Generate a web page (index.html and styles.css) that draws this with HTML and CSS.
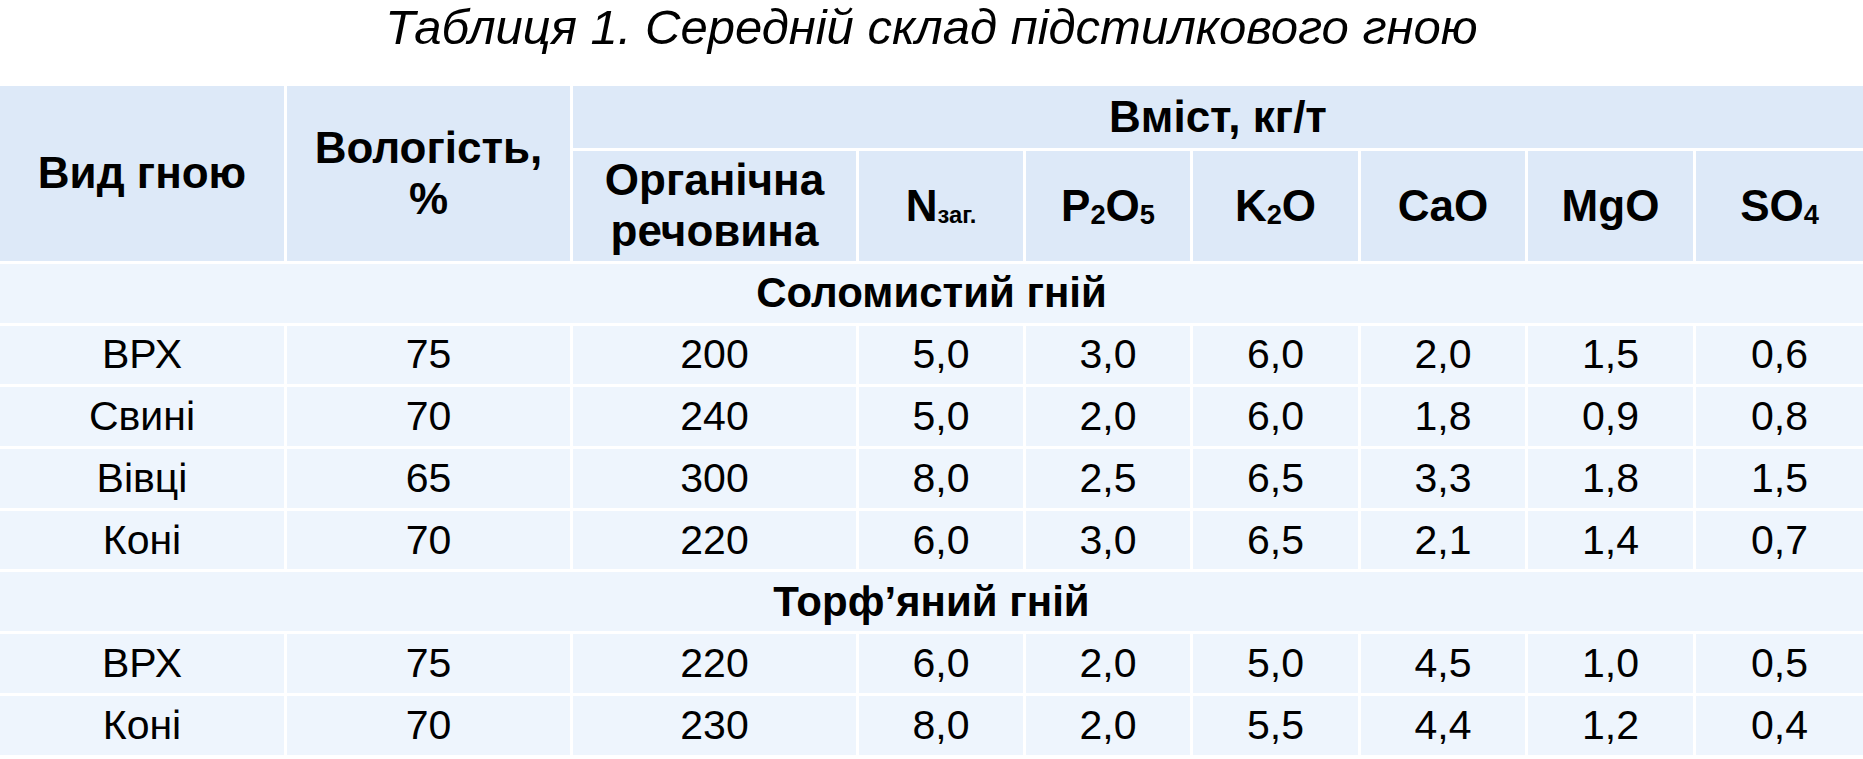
FILE: index.html
```html
<!DOCTYPE html>
<html lang="uk">
<head>
<meta charset="utf-8">
<title>Таблиця 1</title>
<link rel="stylesheet" href="styles.css">
</head>
<body>
<h1 class="title">Таблиця 1. Середній склад підстилкового гною</h1>
<div class="table">
  <div class="cell head span-rows">Вид гною</div>
  <div class="cell head span-rows">Вологість,<br>%</div>
  <div class="cell head group">Вміст, кг/т</div>
  <div class="cell head">Органічна<br>речовина</div>
  <div class="cell head">N<sub class="sub-word">заг.</sub></div>
  <div class="cell head">P<sub>2</sub>O<sub>5</sub></div>
  <div class="cell head">K<sub>2</sub>O</div>
  <div class="cell head">CaO</div>
  <div class="cell head">MgO</div>
  <div class="cell head">SO<sub>4</sub></div>

  <div class="cell section">Соломистий гній</div>

  <div class="cell">ВРХ</div><div class="cell">75</div><div class="cell">200</div><div class="cell">5,0</div><div class="cell">3,0</div><div class="cell">6,0</div><div class="cell">2,0</div><div class="cell">1,5</div><div class="cell">0,6</div>
  <div class="cell">Свині</div><div class="cell">70</div><div class="cell">240</div><div class="cell">5,0</div><div class="cell">2,0</div><div class="cell">6,0</div><div class="cell">1,8</div><div class="cell">0,9</div><div class="cell">0,8</div>
  <div class="cell">Вівці</div><div class="cell">65</div><div class="cell">300</div><div class="cell">8,0</div><div class="cell">2,5</div><div class="cell">6,5</div><div class="cell">3,3</div><div class="cell">1,8</div><div class="cell">1,5</div>
  <div class="cell">Коні</div><div class="cell">70</div><div class="cell">220</div><div class="cell">6,0</div><div class="cell">3,0</div><div class="cell">6,5</div><div class="cell">2,1</div><div class="cell">1,4</div><div class="cell">0,7</div>

  <div class="cell section">Торф’яний гній</div>

  <div class="cell">ВРХ</div><div class="cell">75</div><div class="cell">220</div><div class="cell">6,0</div><div class="cell">2,0</div><div class="cell">5,0</div><div class="cell">4,5</div><div class="cell">1,0</div><div class="cell">0,5</div>
  <div class="cell">Коні</div><div class="cell">70</div><div class="cell">230</div><div class="cell">8,0</div><div class="cell">2,0</div><div class="cell">5,5</div><div class="cell">4,4</div><div class="cell">1,2</div><div class="cell">0,4</div>
</div>
</body>
</html>
```

FILE: styles.css
```css
html, body {
  margin: 0;
  padding: 0;
  background: #ffffff;
}

body {
  width: 1863px;
  height: 759px;
  overflow: hidden;
  font-family: "Liberation Sans", Arial, sans-serif;
  color: #000000;
}

.title {
  margin: 0;
  height: 86px;
  font-size: 49px;
  line-height: 55px;
  font-weight: normal;
  font-style: italic;
  text-align: center;
}

.table {
  display: grid;
  grid-template-columns: 284px 283px 283px 164px 164px 165px 164px 165px 1fr;
  grid-template-rows: 62px 110px repeat(8, 58.7px);
  gap: 3px;
  background: #ffffff;
}

.cell {
  display: flex;
  align-items: center;
  justify-content: center;
  text-align: center;
  background: #eef5fd;
  font-size: 41px;
  line-height: 1.15;
}

.head {
  background: #dde9f8;
  font-weight: bold;
  font-size: 44px;
}

.span-rows {
  grid-row: span 2;
}

.group {
  grid-column: 3 / span 7;
}

.section {
  grid-column: 1 / -1;
  font-weight: bold;
  font-size: 42px;
}

sub {
  display: inline-block;
  font-size: 62%;
  line-height: 1;
  transform: translateY(0.32em);
}

.sub-word {
  font-size: 54%;
  transform: translateY(0.38em);
}
```
